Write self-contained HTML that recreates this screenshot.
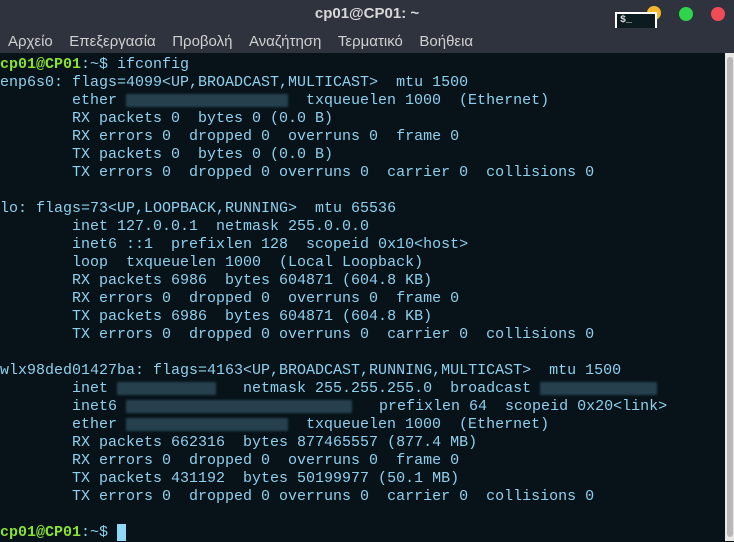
<!DOCTYPE html>
<html><head><meta charset="utf-8"><style>
body{margin:0;width:734px;height:541px;overflow:hidden;background:#071319;font-family:"Liberation Sans",sans-serif}
#title{position:absolute;left:0;top:0;width:734px;height:28px;background:#2f333e;color:#d8d8d8;font-size:15px;font-weight:bold;text-align:center;line-height:28px}
#menu{position:absolute;left:0;top:28px;width:734px;height:25px;background:#2f333e;color:#d0d0d0;font-size:15px;line-height:27px}
#menu span{margin-left:8px;margin-right:8.5px}
.c{position:absolute;width:14px;height:14px;border-radius:50%;top:7px}
#term{position:absolute;left:0px;top:56px;font-family:"Liberation Mono",monospace;font-size:15px;line-height:18px;color:#8fd0ef;white-space:pre}
.g{color:#8ae234;font-weight:bold}
.b{display:inline-block;height:13px;vertical-align:middle;background:#2e4c5c;opacity:.8;filter:blur(1px)}
#sb{position:absolute;left:725px;top:53px;width:9px;height:488px;background:#e8e8e8}
#sb div{position:absolute;left:2px;top:4px;width:6px;height:480px;background:#b8b8b8;border-radius:3px}
.cur{display:inline-block;width:9px;height:17px;background:#8fd8f8;vertical-align:top}
</style></head><body>
<div id="title">cp01@CP01: ~</div>
<div class="c" style="left:647px;top:6px;background:#f5b82b"></div>
<div class="c" style="left:679px;background:#2fd44a"></div>
<div class="c" style="left:711px;background:#f24b55"></div>
<div style="position:absolute;left:615px;top:12px;width:42px;height:16px;background:#0c1b20;border:2px solid #fff;border-bottom:none;color:#ddd;font:bold 10px 'Liberation Mono',monospace;padding-left:3px;box-sizing:border-box;line-height:14px">$_</div>
<div id="menu"><span>Αρχείο</span><span>Επεξεργασία</span><span>Προβολή</span><span>Αναζήτηση</span><span>Τερματικό</span><span>Βοήθεια</span></div>
<div id="term"><span class="g">cp01@CP01</span>:~$ ifconfig
enp6s0: flags=4099&lt;UP,BROADCAST,MULTICAST&gt;  mtu 1500
        ether <span class="b" style="width:162px"></span>  txqueuelen 1000  (Ethernet)
        RX packets 0  bytes 0 (0.0 B)
        RX errors 0  dropped 0  overruns 0  frame 0
        TX packets 0  bytes 0 (0.0 B)
        TX errors 0  dropped 0 overruns 0  carrier 0  collisions 0

lo: flags=73&lt;UP,LOOPBACK,RUNNING&gt;  mtu 65536
        inet 127.0.0.1  netmask 255.0.0.0
        inet6 ::1  prefixlen 128  scopeid 0x10&lt;host&gt;
        loop  txqueuelen 1000  (Local Loopback)
        RX packets 6986  bytes 604871 (604.8 KB)
        RX errors 0  dropped 0  overruns 0  frame 0
        TX packets 6986  bytes 604871 (604.8 KB)
        TX errors 0  dropped 0 overruns 0  carrier 0  collisions 0

wlx98ded01427ba: flags=4163&lt;UP,BROADCAST,RUNNING,MULTICAST&gt;  mtu 1500
        inet <span class="b" style="width:99px"></span>   netmask 255.255.255.0  broadcast <span class="b" style="width:117px"></span>
        inet6 <span class="b" style="width:226px"></span>   prefixlen 64  scopeid 0x20&lt;link&gt;
        ether <span class="b" style="width:162px"></span>  txqueuelen 1000  (Ethernet)
        RX packets 662316  bytes 877465557 (877.4 MB)
        RX errors 0  dropped 0  overruns 0  frame 0
        TX packets 431192  bytes 50199977 (50.1 MB)
        TX errors 0  dropped 0 overruns 0  carrier 0  collisions 0

<span class="g">cp01@CP01</span>:~$ <span class="cur"></span></div>
<div id="sb"><div></div></div>
</body></html>
